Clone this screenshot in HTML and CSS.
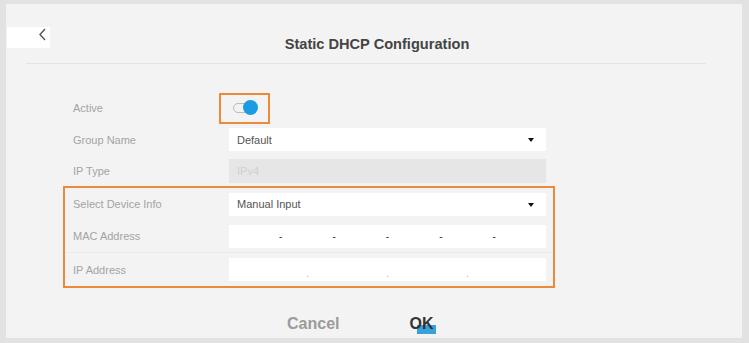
FILE: index.html
```html
<!doctype html>
<html lang="en">
 <head>
  <meta charset="UTF-8">
  <title>Static DHCP Configuration</title>
  <link rel="stylesheet" href="styles.css">
 </head>
 <body>

	<div id="all">
		<!-- 상단 제목 -->
		<header>
			<div class="back">
				<svg width="10" height="14" viewBox="0 0 10 14"><polyline points="7,1 2,6.5 7,12" fill="none" stroke="#555" stroke-width="1.4"/></svg>
			</div>
			<div class="tit">Static DHCP Configuration</div>
		</header>

		<!-- 입력 폼 -->
		<section class="form">
			<div class="row first">
				<div class="lab">Active</div>
				<div class="field">
					<div class="mark">
						<span class="switch"><span class="knob"></span></span>
					</div>
				</div>
			</div>
			<div class="row">
				<div class="lab">Group Name</div>
				<div class="field"><div class="box sel">Default<span class="caret"></span></div></div>
			</div>
			<div class="row">
				<div class="lab">IP Type</div>
				<div class="field"><div class="box off">IPv4</div></div>
			</div>

			<div class="group">
				<div class="row">
					<div class="lab">Select Device Info</div>
					<div class="field"><div class="box sel">Manual Input<span class="caret"></span></div></div>
				</div>
				<div class="row">
					<div class="lab">MAC Address</div>
					<div class="field">
						<div class="box parts">
							<span></span><i>-</i><span></span><i>-</i><span></span><i>-</i><span></span><i>-</i><span></span><i>-</i><span></span>
						</div>
					</div>
				</div>
				<div class="row last">
					<div class="lab">IP Address</div>
					<div class="field">
						<div class="box parts ip">
							<span></span><i>.</i><span></span><i>.</i><span></span><i>.</i><span></span>
						</div>
					</div>
				</div>
			</div>
		</section>

		<!-- 버튼 -->
		<div class="btns">
			<span class="cancel">Cancel</span>
			<span class="ok">OK</span>
		</div>
	</div>

 </body>
</html>
```

FILE: styles.css
```css
/* 기본 */
body {
margin: 0;
background: #e2e2e2;
font-family: "Liberation Sans", Arial, sans-serif;
}

/* 전체 틀 */
#all {
width: 736px;
height: 334px;
margin: 4px 0 0 6px;
background: #f3f3f3;
overflow: hidden;
}

/* 제목 부분 */
header {
height: 59px;
margin: 0 36px 0 20px;
border-bottom: 1px solid #e4e4e4;
display: flex;
align-items: center;
position: relative;
}

.back {
position: absolute;
left: -19px;
top: 23px;
width: 43px;
height: 21px;
background: #fff;
}

.back svg {
position: absolute;
right: 2px;
top: 1px;
}

.tit {
flex: 1;
text-align: center;
padding-left: 22px;
padding-top: 20px;
font-size: 14.6px;
font-weight: bold;
color: #444;
}

/* 폼 */
.form {
width: 492px;
margin: 28px 0 0 57px;
}

.row {
height: 31px;
padding: 0 9px 0 10px;
display: flex;
align-items: center;
}

.row.first {
height: 32px;
}

.lab {
width: 156px;
font-size: 11px;
color: #a3a3a3;
}

.field {
width: 317px;
}

/* 토글 */
.mark {
width: 47px;
height: 27px;
margin-left: -10px;
border: 2px solid #ec8a3c;
display: flex;
align-items: center;
}

.switch {
width: 19px;
height: 8px;
margin-left: 12px;
border: 1px solid #bbb;
border-radius: 5px;
position: relative;
}

.knob {
position: absolute;
right: -5px;
top: -4px;
width: 15px;
height: 15px;
border-radius: 50%;
background: #1c9be2;
}

/* 입력칸 */
.box {
height: 23px;
background: #fff;
font-size: 11px;
color: #555;
padding: 0 8px;
display: flex;
align-items: center;
position: relative;
}

.off {
background: #e6e6e6;
color: #d0d0d0;
height: 24px;
}

.caret {
position: absolute;
right: 12px;
top: 10px;
border-left: 3px solid transparent;
border-right: 3px solid transparent;
border-top: 4px solid #111;
}

.parts {
padding: 0;
}

.parts span {
flex: 1;
}

.parts i {
font-style: normal;
color: #333;
font-size: 10px;
}

.ip i {
color: #aaa;
padding-top: 8px;
}

/* 주황색 테두리 부분 */
.group {
border: 2px solid #ec8a3c;
}

.group .row {
height: 32px;
padding: 0 7px 0 8px;
}

.group .row.last {
height: 33px;
border-top: 1px solid #ebebeb;
}

/* 버튼 */
.btns {
margin-top: 27px;
padding-left: 281px;
display: flex;
gap: 70px;
font-size: 16px;
font-weight: bold;
}

.cancel {
color: #9b9b9b;
}

.ok {
color: #333;
position: relative;
z-index: 0;
}

.ok::after {
content: "";
position: absolute;
left: 8px;
top: 10px;
width: 19px;
height: 9px;
background: #3aa0dc;
z-index: -1;
}
```
